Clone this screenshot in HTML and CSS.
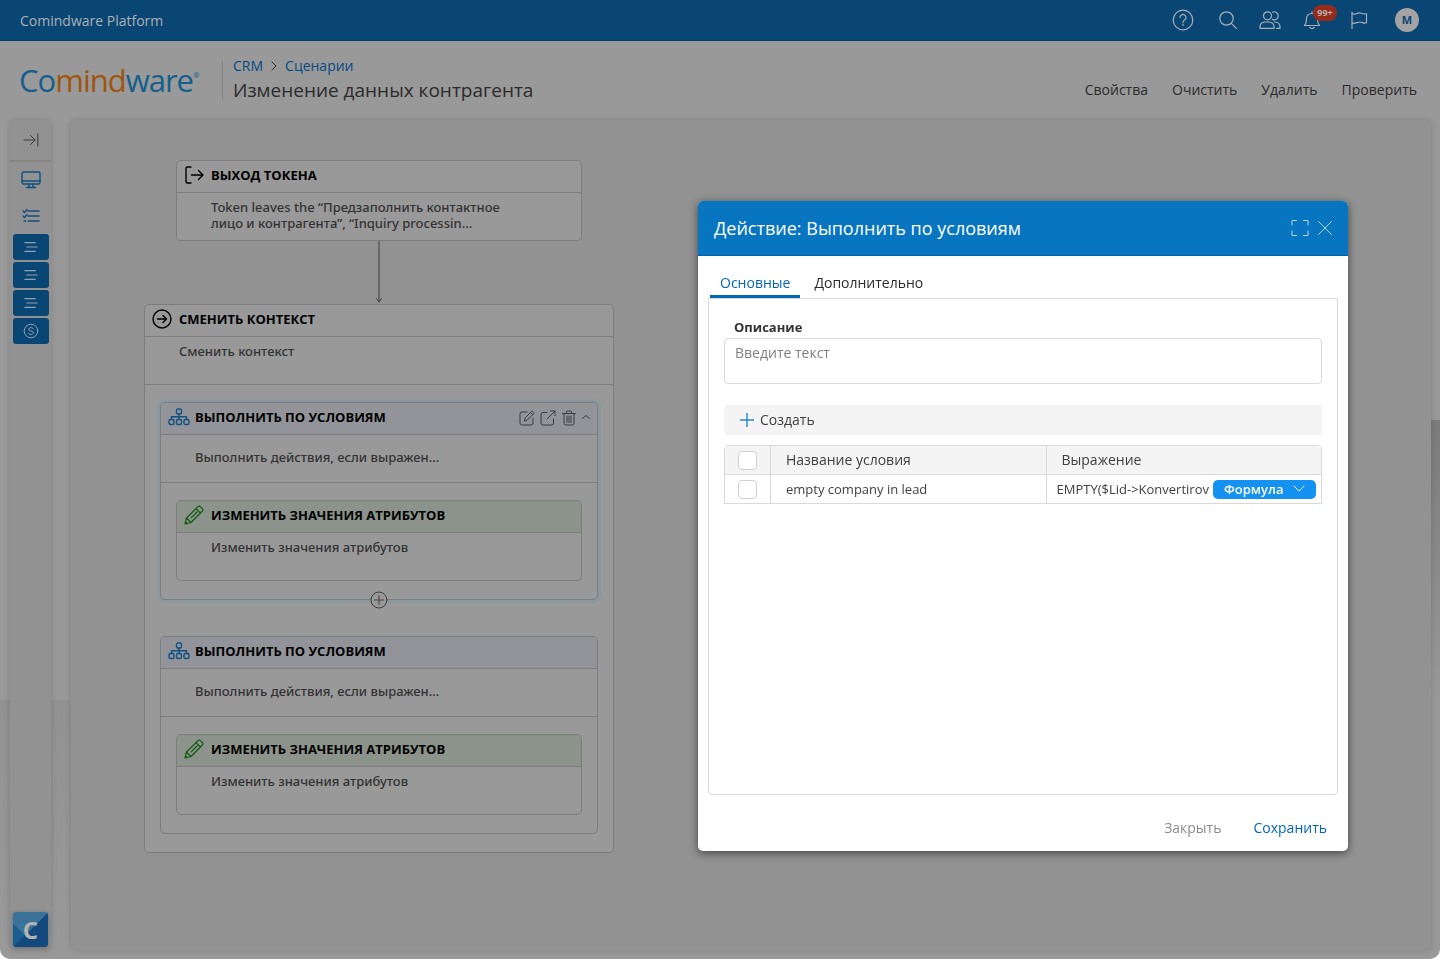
FILE: index.html
```html
<!DOCTYPE html>
<html lang="ru">
<head>
<meta charset="utf-8">
<meta name="viewport" content="width=device-width, initial-scale=1">
<title>Comindware Platform</title>
<link rel="stylesheet" href="styles.css">
</head>
<body>
<svg class="sprite" aria-hidden="true">
  <symbol id="i-tree" viewBox="0 0 22 18"><rect x="8.5" y="1" width="5" height="5" rx="1.5"/><rect x="1" y="11.500" width="5" height="5" rx="1.500"/><rect x="8.500" y="11.500" width="5" height="5" rx="1.500"/><rect x="16" y="11.500" width="5" height="5" rx="1.500"/><path d="M11 6v5.500M3.500 11.500V8.700h15v2.800"/></symbol>
  <symbol id="i-pencil" viewBox="0 0 20 20"><path d="M1 19l1.500-6L14 1.600a1.600 1.600 0 0 1 2.300 0l2.100 2.100a1.600 1.600 0 0 1 0 2.300L7 17.500zM2.500 13L7 17.500M12 3.600L16.400 8M7.200 12.800l5.800-5.800M1.500 17l1.500 1.500"/></symbol>
  <symbol id="i-lines" viewBox="0 0 16 12"><path d="M1 1h12M3 6h12M1 11h12"/></symbol>
</svg>

<header class="topbar">
  <span class="product">Comindware Platform</span>
  <nav class="tools" aria-label="Инструменты">
    <button class="tool tool-help" aria-label="Справка"><svg viewBox="0 0 22 22"><circle cx="11" cy="11" r="9.800"/><path d="M8 8.500a3 3 0 1 1 4.500 2.600c-1 .6-1.500 1-1.500 2.200"/><path d="M11 15v1.500"/></svg></button>
    <button class="tool" aria-label="Поиск"><svg viewBox="0 0 22 22"><circle cx="9.500" cy="9.500" r="6.700"/><path d="M14.300 14.300l5 5"/></svg></button>
    <button class="tool" aria-label="Пользователи"><svg viewBox="0 0 22 22"><circle cx="8.500" cy="6.800" r="4"/><path d="M1 19.300v-1.500c0-3 2.500-4.800 5-4.800h4c2.500 0 5 1.800 5 4.800v1.500zM13.500 3.200a4 4 0 1 1 0 7.200M15.500 13c3 0 5.500 1.800 5.500 4.800v1.500h-3.500"/></svg></button>
    <button class="tool" aria-label="Уведомления"><svg viewBox="0 0 22 22"><path d="M3.500 16.500c2-2 2-3.500 2-6.500 0-3.500 2-5.500 5.500-5.500s5.500 2 5.500 5.500c0 3 0 4.500 2 6.500zM11 4.500V2.800M8.800 18.500c.8 1.400 3.600 1.400 4.400 0"/></svg><span class="count">99+</span></button>
    <button class="tool tool-wide" aria-label="Флаг"><svg viewBox="0 0 22 22"><path d="M4 19.500V3M4 4.500c4 2 5-1 8-.5 2.500.400 4 1.500 6.500.8v9c-3 1-4-.6-6.500-.8-3-.2-4 2-8 1"/></svg></button>
    <button class="avatar" aria-label="Профиль">M</button>
  </nav>
</header>

<section class="heading">
  <div class="logo">Co<b>mind</b>ware<sup>®</sup></div>
  <div class="where">
    <nav class="crumbs" aria-label="Путь"><a href="#">CRM</a><svg viewBox="0 0 6 10"><path d="M1 1l4 4-4 4"/></svg><a href="#">Сценарии</a></nav>
    <h1>Изменение данных контрагента</h1>
  </div>
  <div class="actions">
    <button>Свойства</button><button>Очистить</button><button>Удалить</button><button>Проверить</button>
  </div>
</section>

<main class="workspace">
  <aside class="rail">
    <button class="rail-toggle" aria-label="Развернуть"><svg viewBox="0 0 16 14"><path d="M1 7h11M7.500 2.500L12 7l-4.500 4.500M14.800 1v12"/></svg></button>
    <button class="rail-icon" aria-label="Рабочий стол"><svg viewBox="0 0 20 18"><rect x="1" y="1" width="18" height="12" rx="1.500"/><path d="M1 10h18M8 13v3M12 13v3M5.500 16.500h9"/></svg></button>
    <button class="rail-icon" aria-label="Задачи"><svg viewBox="0 0 20 18"><path d="M7 4h11M7 9h11M7 14h11M2 4l1.500 1.500L6 2.500M2 9l1.500 1.500L6 7.500M3 14h1.500"/></svg></button>
    <div class="rail-group">
      <button class="rail-item" aria-label="Список 1"><svg><use href="#i-lines"/></svg></button>
      <button class="rail-item" aria-label="Список 2"><svg><use href="#i-lines"/></svg></button>
      <button class="rail-item" aria-label="Список 3"><svg><use href="#i-lines"/></svg></button>
      <button class="rail-item" aria-label="Счета"><svg class="coin" viewBox="0 0 16 16"><circle cx="8" cy="8" r="6.800"/><path d="M10.200 5.800C9.800 4.900 9 4.600 8 4.600c-1.200 0-2.200.6-2.200 1.700 0 2.300 4.500 1.100 4.500 3.500 0 1.100-1 1.700-2.300 1.700-1.100 0-2-.4-2.400-1.300"/></svg></button>
    </div>
    <button class="rail-brand" aria-label="Comindware">C</button>
  </aside>

  <div class="canvas">
    <div class="flow">
      <article class="node node-token">
        <h2><svg viewBox="0 0 20 20"><path d="M7 2H3.500A1.500 1.500 0 0 0 2 3.500v13A1.500 1.500 0 0 0 3.500 18H7M7.500 10H19M14.500 5.500L19 10l-4.500 4.500"/></svg>Выход токена</h2>
        <p>Token leaves the “Предзаполнить контактное<br>лицо и контрагента”, “Inquiry processin...</p>
      </article>
      <svg class="arrow" viewBox="0 0 8 64"><path d="M4 0v62M1.500 58.500L4 62l2.500-3.500"/></svg>
      <article class="node node-context">
        <h2><svg viewBox="0 0 20 20"><circle cx="10" cy="10" r="9"/><path d="M5.500 10h9M11 6.500l3.500 3.500-3.500 3.500"/></svg>Сменить контекст</h2>
        <p>Сменить контекст</p>
        <div class="children">
          <article class="node node-cond selected">
            <h2><svg viewBox="0 0 22 18"><use href="#i-tree"/></svg>Выполнить по условиям
              <span class="node-tools">
                <button aria-label="Изменить"><svg viewBox="0 0 16 16"><path d="M8 2H3a2 2 0 0 0-2 2v9a2 2 0 0 0 2 2h9a2 2 0 0 0 2-2V8.500M5.500 10.800l.7-3 6.300-6.300a1 1 0 0 1 1.400 0l.8.8a1 1 0 0 1 0 1.400L8.400 10zM11.500 2.500l2.200 2.200"/></svg></button>
                <button aria-label="Открыть"><svg viewBox="0 0 16 16"><path d="M7 2.500H3a2 2 0 0 0-2 2V13a2 2 0 0 0 2 2h8.500a2 2 0 0 0 2-2V9M7 9l8-8M10.500 1H15v4.500"/></svg></button>
                <button aria-label="Удалить"><svg viewBox="0 0 16 16"><path d="M1.500 3.500h13M5.500 3.500V2a1 1 0 0 1 1-1h3a1 1 0 0 1 1 1v1.500M3 3.500V13a2 2 0 0 0 2 2h6a2 2 0 0 0 2-2V3.500M6 6v6.500M8 6v6.500M10 6v6.500"/></svg></button>
                <button class="fold" aria-label="Свернуть"><svg viewBox="0 0 8 16"><path d="M.5 8.500L4 5.500l3.500 3"/></svg></button>
              </span>
            </h2>
            <p>Выполнить действия, если выражен...</p>
            <div class="children">
              <article class="node node-edit">
                <h2><svg><use href="#i-pencil"/></svg>Изменить значения атрибутов</h2>
                <p>Изменить значения атрибутов</p>
              </article>
            </div>
            <button class="add" aria-label="Добавить"><svg viewBox="0 0 18 18"><circle cx="9" cy="9" r="8"/><path d="M9 4.500v9M4.500 9h9"/></svg></button>
          </article>
          <article class="node node-cond">
            <h2><svg viewBox="0 0 22 18"><use href="#i-tree"/></svg>Выполнить по условиям</h2>
            <p>Выполнить действия, если выражен...</p>
            <div class="children">
              <article class="node node-edit">
                <h2><svg><use href="#i-pencil"/></svg>Изменить значения атрибутов</h2>
                <p>Изменить значения атрибутов</p>
              </article>
            </div>
          </article>
        </div>
      </article>
    </div>
  </div>
</main>

<div class="overlay">
  <section class="modal" role="dialog" aria-labelledby="modal-title">
    <header class="modal-head">
      <h2 id="modal-title">Действие: Выполнить по условиям</h2>
      <button aria-label="На весь экран"><svg viewBox="0 0 18 18"><path d="M1 6V1.500h4.500M12.500 1.500H17V6M17 12v4.500h-4.500M5.500 16.500H1V12"/></svg></button>
      <button aria-label="Закрыть окно"><svg viewBox="0 0 18 18"><path d="M2.500 2.500l13 13M15.500 2.500l-13 13"/></svg></button>
    </header>
    <div class="tabs" role="tablist">
      <button class="tab active" role="tab" aria-selected="true">Основные</button>
      <button class="tab" role="tab" aria-selected="false">Дополнительно</button>
    </div>
    <div class="panel">
      <label for="descr">Описание</label>
      <textarea id="descr" placeholder="Введите текст"></textarea>
      <div class="toolbar">
        <button class="create"><svg viewBox="0 0 14 14"><path d="M7 0v14M0 7h14"/></svg>Создать</button>
      </div>
      <table class="grid">
        <thead>
          <tr><th class="pick"><input type="checkbox" aria-label="Выбрать все"></th><th>Название условия</th><th>Выражение</th></tr>
        </thead>
        <tbody>
          <tr><td class="pick"><input type="checkbox" aria-label="Выбрать строку"></td><td>empty company in lead</td><td class="expr"><div class="expr-row"><span class="code">EMPTY($Lid-&gt;Konvertirov</span><button class="formula">Формула<svg viewBox="0 0 12 8"><path d="M1 1l5 5 5-5"/></svg></button></div></td></tr>
        </tbody>
      </table>
    </div>
    <footer class="modal-foot">
      <button class="close">Закрыть</button>
      <button class="save">Сохранить</button>
    </footer>
  </section>
</div>
</body>
</html>
```

FILE: styles.css
```css
* { box-sizing: border-box; }

html { background: #fff; }

body {
  margin: 0;
  min-height: 100vh;
  display: flex;
  flex-direction: column;
  overflow: hidden;
  border-radius: 0 0 10px 10px;
  background: #999;
  color: #2b2b2b;
  font: 14px/20px "Open Sans", "Noto Sans", sans-serif;
}

button {
  margin: 0;
  padding: 0;
  border: 0;
  background: none;
  color: inherit;
  font: inherit;
  cursor: pointer;
}

h1, h2, p { margin: 0; }
a { color: #044a84; text-decoration: none; }

svg {
  display: block;
  flex: none;
  fill: none;
  stroke: currentColor;
  stroke-linecap: round;
  stroke-linejoin: round;
}

.sprite { position: absolute; width: 0; height: 0; }

/* Top bar */
.topbar {
  display: flex;
  align-items: center;
  justify-content: space-between;
  height: 41px;
  padding: 0 21px 0 20px;
  border-bottom: 1px solid #043e6e;
  background: #0a4673;
  color: #a9b0b6;
}
.product { padding-top: 2px; }

.tools { display: flex; align-items: center; gap: 20px; }
.tool { position: relative; width: 22px; height: 22px; }
.tool svg { width: 22px; height: 22px; stroke-width: 1.2; }
.tool-help { margin-right: 3px; }
.tool-wide { margin-left: 5px; }

.count {
  position: absolute;
  top: -4px;
  left: 12px;
  width: 24px;
  height: 16px;
  border-radius: 8px;
  background: #962b1c;
  color: #b5b0ae;
  font-size: 9px;
  font-weight: 700;
  line-height: 16px;
}

.avatar {
  width: 24px;
  height: 24px;
  margin-left: 5px;
  border-radius: 50%;
  background: #a3a3a3;
  color: #0a4673;
  font-size: 11px;
  font-weight: 700;
  line-height: 24px;
}

/* Page heading */
.heading {
  display: flex;
  height: 79px;
  padding: 15px 23px 0 19px;
}

.logo {
  width: 203px;
  padding-top: 4px;
  color: #145f8e;
  font-size: 31px;
  letter-spacing: -1px;
  line-height: 40px;
}
.logo b { color: #a0550f; font-weight: 400; }
.logo sup { font-size: 8px; line-height: 8px; vertical-align: 14px; }

.where {
  flex: 1;
  height: 48px;
  padding-left: 11px;
  background: linear-gradient(#828282, #828282) 0 5px / 1px 39px no-repeat;
}
.crumbs { display: flex; align-items: center; gap: 8px; }
.crumbs svg { width: 6px; height: 10px; color: #2b2b2b; }
.where h1 { font-size: 19px; font-weight: 400; line-height: 28px; }

.actions { display: flex; gap: 24px; padding-top: 24px; height: 44px; }

/* Workspace */
.workspace {
  flex: 1;
  display: flex;
  gap: 20px;
  padding: 0 9px 9px 10px;
  background:
    linear-gradient(175deg, #7b7b7b, #999) right 300px / 9px 280px no-repeat,
    linear-gradient(#929292, #999) 0 580px / 71px 250px no-repeat;
}

.rail, .canvas {
  border-radius: 5px;
  background: #929292;
  box-shadow: 0 0 6px rgba(0, 0, 0, .16);
}

.rail {
  display: flex;
  flex-direction: column;
  align-items: center;
  width: 41px;
  padding-bottom: 3px;
}

.rail-toggle {
  display: flex;
  align-items: center;
  justify-content: center;
  width: 100%;
  height: 42px;
  border-bottom: 2px solid #868686;
  color: #3a3a3a;
}
.rail-toggle svg { width: 16px; height: 14px; }

.rail-icon { height: 36px; color: #125080; }
.rail-icon svg { width: 20px; height: 18px; stroke-width: 1.4; }

.rail-group { display: grid; gap: 2px; }
.rail-item {
  display: flex;
  align-items: center;
  justify-content: center;
  width: 36px;
  height: 26px;
  border-radius: 3px;
  background: #0a4673;
  color: #8ea0af;
}
.rail-item svg { width: 14px; height: 12px; stroke-width: 1.2; }
.rail-item .coin { width: 16px; height: 16px; stroke-width: 1; }

.rail-brand {
  width: 35px;
  height: 35px;
  margin-top: auto;
  border-radius: 3px;
  background: linear-gradient(135deg, transparent 50%, #124a7e 50%), linear-gradient(45deg, #1b5e92 33%, #3a7399 33%);
  box-shadow: 0 1px 4px rgba(0, 0, 0, .3);
  color: #b4b4b4;
  font-size: 24px;
  font-weight: 700;
  line-height: 34px;
}

.canvas { flex: 1; padding: 40px 73px; }

/* Scenario diagram */
.flow {
  display: flex;
  flex-direction: column;
  align-items: center;
  width: 470px;
}

.node {
  position: relative;
  border: 1px solid #7d7d7d;
  border-radius: 5px;
  background: #999;
}
.node h2 {
  display: flex;
  align-items: center;
  gap: 7px;
  height: 32px;
  padding: 0 7px 4px;
  border-bottom: 1px solid #7d7d7d;
  border-radius: 4px 4px 0 0;
  color: #000;
  font-size: 13px;
  font-weight: 700;
  text-transform: uppercase;
}
.node h2 > svg { width: 20px; height: 20px; stroke-width: 1.4; }
.node p {
  height: 47px;
  padding: 6px 34px;
  color: #333;
  font-family: "Noto Sans", "Open Sans", sans-serif;
  font-size: 13px;
  font-weight: 500;
  line-height: 16px;
}

.node-token { width: 406px; }
.arrow { width: 8px; height: 63px; color: #3c3c3c; }
.node-context { width: 100%; }
.children { padding: 17px 15px 18px; border-top: 1px solid #7d7d7d; }
.node-context > .children { display: grid; gap: 36px; }

.node-cond h2 { background: #93949a; gap: 5px; }
.node-cond > h2 > svg { width: 22px; height: 18px; color: #125080; }
.node-cond > p { padding-top: 14px; }
.node.selected { box-shadow: 0 0 0 3px #8a989f; }

.node-edit h2 { background: #8b938a; gap: 7px; }
.node-edit h2 > svg { color: #105a10; stroke-width: 1.2; }

.node-tools { display: flex; gap: 5px; margin-left: auto; padding-top: 3px; color: #3c3c3c; }
.node-tools svg { width: 16px; height: 16px; }
.node-tools .fold svg { width: 8px; }

.add {
  position: absolute;
  bottom: -10px;
  left: 50%;
  margin-left: -9px;
  border-radius: 50%;
  background: #999;
  color: #3c3c3c;
}
.add svg { width: 18px; height: 18px; }

/* Dialog */
.overlay {
  position: fixed;
  inset: 0;
  display: flex;
  justify-content: flex-end;
  align-items: flex-start;
  padding: 201px 92px 0;
}

.modal {
  display: flex;
  flex-direction: column;
  width: 650px;
  min-height: 650px;
  border-radius: 5px;
  background: #fff;
  box-shadow: 0 2px 8px rgba(0, 0, 0, .55);
}

.modal-head {
  display: flex;
  align-items: center;
  gap: 7px;
  height: 55px;
  padding: 0 14px 0 16px;
  border-bottom: 1px solid #0462ab;
  border-radius: 5px 5px 0 0;
  background: #0775c0;
  color: #fff;
}
.modal-head h2 { flex: 1; font-size: 18px; font-weight: 400; line-height: 24px; }
.modal-head svg { width: 18px; height: 18px; color: #b9d9f0; }

.tabs { display: flex; gap: 4px; padding: 9px 12px 0; }
.tab { height: 33px; padding: 8px 10px 2px; border-bottom: 3px solid transparent; }
.tab.active { border-color: #0067b8; color: #0067b8; }

.panel {
  flex: 1;
  margin: 0 10px;
  padding: 18px 15px;
  border: 1px solid #d9d9d9;
  border-radius: 0 0 4px 4px;
}
.panel label {
  display: block;
  margin-bottom: 1px;
  padding-left: 10px;
  color: #333;
  font-size: 13px;
  font-weight: 700;
}

.panel textarea {
  display: block;
  width: 100%;
  height: 46px;
  padding: 4px 10px;
  border: 1px solid #d9d9d9;
  border-radius: 4px;
  font: inherit;
  resize: none;
}
.panel textarea::placeholder { color: #808080; opacity: 1; }

.toolbar {
  display: flex;
  height: 30px;
  margin: 21px 0 10px;
  padding: 0 16px;
  border-radius: 4px;
  background: #f4f4f4;
  color: #404040;
}
.create { display: flex; align-items: center; gap: 6px; }
.create svg { width: 14px; height: 14px; color: #2a86c8; stroke-width: 1.4; }

.grid {
  width: 100%;
  border: 1px solid #d9d9d9;
  border-radius: 4px 4px 0 0;
  border-spacing: 0;
  table-layout: fixed;
  color: #404040;
}
.grid th, .grid td {
  height: 28px;
  padding: 0 15px;
  border-left: 1px solid #d9d9d9;
  font-weight: 400;
  text-align: left;
}
.grid th { height: 29px; border-bottom: 1px solid #d9d9d9; background: #f4f4f4; }
.grid td { font-size: 13px; }
.grid .pick { width: 45px; padding: 0 13px; border-left: 0; }
.grid input {
  display: block;
  width: 19px;
  height: 19px;
  margin: 0;
  border: 1px solid #d0d0d0;
  border-radius: 4px;
  background: #fff;
  appearance: none;
}
.grid .expr { padding: 0 5px 0 10px; }
.expr-row { display: flex; align-items: center; gap: 2px; }
.code { flex: 1; white-space: nowrap; }
.formula {
  display: flex;
  align-items: center;
  justify-content: space-between;
  width: 103px;
  height: 19px;
  padding: 0 11px;
  border-radius: 5px;
  background: #1492f2;
  color: #fff;
  font-weight: 600;
  line-height: 19px;
}
.formula svg { width: 12px; height: 8px; }

.modal-foot {
  display: flex;
  justify-content: flex-end;
  gap: 32px;
  padding: 23px 21px 13px;
}
.close { color: #8c8c8c; }
.save { color: #0067b8; }
```
